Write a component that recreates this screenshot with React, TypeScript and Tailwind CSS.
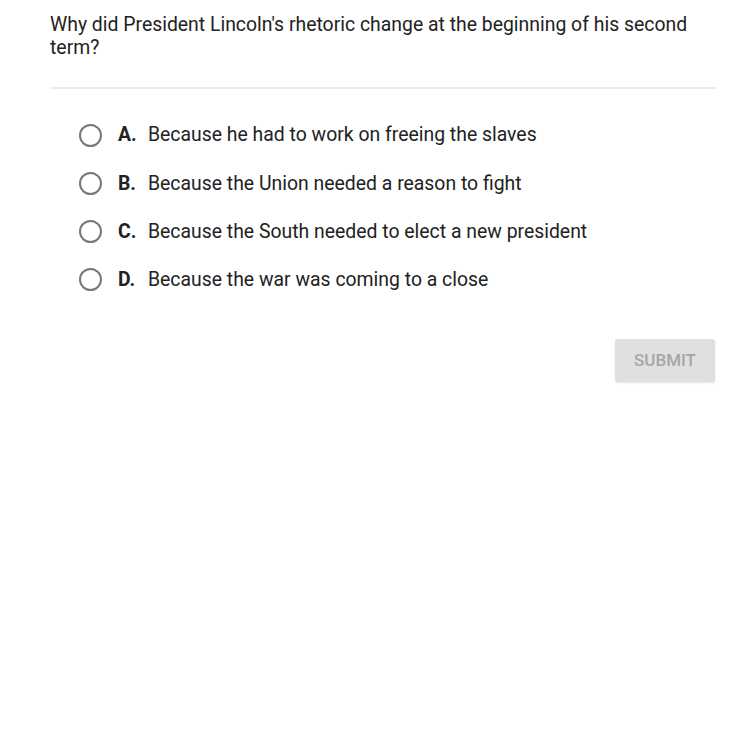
import React from "react";

const options = [
  { l: "A.", t: "Because he had to work on freeing the slaves" },
  { l: "B.", t: "Because the Union needed a reason to fight" },
  { l: "C.", t: "Because the South needed to elect a new president" },
  { l: "D.", t: "Because the war was coming to a close" },
];

export default function App() {
  return (
    <div className="w-[750px] h-[750px] bg-white" style={{ fontFamily: "Roboto, 'Noto Sans', sans-serif" }}>
      <div className="ml-[50px] w-[666px] pt-[13px]">
        <div className="text-[19.4px] leading-[23px] text-[#222]">
          Why did President Lincoln's rhetoric change at the beginning of his second term?
        </div>
        <div className="mt-[28px] h-[2px] bg-[#ececec]" />
        <div className="mt-[35px] flex flex-col gap-[26.3px] pl-[29px]">
          {options.map((o) => (
            <div key={o.l} className="flex items-center h-[22px]">
              <div className="w-[23px] h-[23px] rounded-full border-2 border-[#777] shrink-0" />
              <span className="ml-[16px] text-[19.4px] font-bold text-[#222] w-[30px]">{o.l}</span>
              <span className="text-[19.4px] text-[#222]">{o.t}</span>
            </div>
          ))}
        </div>
        <div className="mt-[48px] flex justify-end">
          <div className="mr-[1px] w-[100px] h-[43px] rounded-[3px] bg-[#e0e0e0] shadow-[0_1px_2px_rgba(0,0,0,0.12)] flex items-center justify-center text-[17px] font-medium text-[#a6a6a6]">
            SUBMIT
          </div>
        </div>
      </div>
    </div>
  );
}
